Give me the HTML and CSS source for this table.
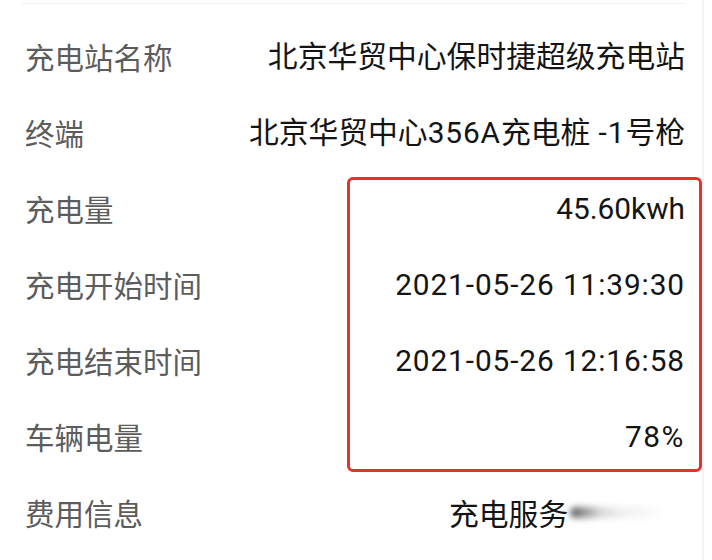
FILE: index.html
```
<!DOCTYPE html>
<html lang="zh-CN">
<head>
<meta charset="utf-8">
<link rel="stylesheet" href="styles.css">
</head>
<body>
<div class="page">
  <div class="topline"></div>
  <div class="list">
    <div class="row"><span class="label">充电站名称</span><span class="value">北京华贸中心保时捷超级充电站</span></div>
    <div class="row"><span class="label">终端</span><span class="value">北京华贸中心<span class="num">356A</span>充电桩<span class="num"> -1</span>号枪</span></div>
    <div class="group">
      <div class="row"><span class="label">充电量</span><span class="value">45.60kwh</span></div>
      <div class="row"><span class="label">充电开始时间</span><span class="value num">2021-05-26 11:39:30</span></div>
      <div class="row"><span class="label">充电结束时间</span><span class="value num">2021-05-26 12:16:58</span></div>
      <div class="row"><span class="label">车辆电量</span><span class="value num wide">78%</span></div>
      <div class="highlight"></div>
    </div>
    <div class="row"><span class="label">费用信息</span><span class="fee"><span class="value">充电服务</span><span class="smudge"></span></span></div>
  </div>
</div>
</body>
</html>
```
FILE: styles.css
```
html, body {
  margin: 0;
  padding: 0;
  background: #ffffff;
}
body {
  width: 712px;
  height: 560px;
  overflow: hidden;
  font-family: "Roboto", "Noto Sans CJK SC", sans-serif;
}
.page {
  position: relative;
  height: 560px;
  border-right: 2px solid #f4f4f4;
  box-sizing: border-box;
  width: 704px;
}
.topline {
  height: 3px;
  margin: 0 18px 0 22px;
  border-bottom: 1px solid #f0f0f0;
}
.list {
  padding: 15px 17px 0 25px;
}
.row {
  height: 76px;
  display: flex;
  align-items: center;
  justify-content: space-between;
  font-size: 29.5px;
  line-height: 1;
}
.label {
  color: #5c5c5c;
  font-family: "Noto Sans CJK SC", sans-serif;
}
.value {
  color: #141414;
  font-size: 29.8px;
  white-space: pre;
}
.num {
  letter-spacing: 0.9px;
}
.num.wide {
  letter-spacing: 1.6px;
}
.group {
  position: relative;
}
.highlight {
  position: absolute;
  left: 322px;
  right: -17px;
  top: 6px;
  bottom: 3px;
  border: 3px solid #e8302a;
  border-radius: 6px;
}
.fee {
  display: flex;
  align-items: center;
  width: 236px;
}
.fee .value {
  font-family: "Noto Sans CJK SC", sans-serif;
}
.smudge {
  display: block;
  width: 95px;
  height: 11px;
  margin-left: 2px;
  border-radius: 6px;
  background: linear-gradient(90deg, #5a5a5a 0%, #9a9a9a 16%, #d8d8d8 32%, #f0f0f0 55%, #f7f7f7 80%, #ffffff 100%);
  filter: blur(3px);
}
```
